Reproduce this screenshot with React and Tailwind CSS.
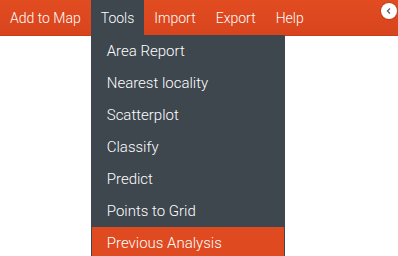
import React, { useState } from 'react';

const navItems = ['Add to Map', 'Tools', 'Import', 'Export', 'Help'];

const toolItems = [
  'Area Report',
  'Nearest locality',
  'Scatterplot',
  'Classify',
  'Predict',
  'Points to Grid',
  'Previous Analysis',
];

const App = () => {
  const [open] = useState('Tools');
  const [hover] = useState('Previous Analysis');

  return (
    <div className="relative w-[398px] h-[256px] bg-white overflow-hidden font-['Roboto',sans-serif] font-light">
      <nav className="relative flex h-[36px] bg-gradient-to-b from-[#e24c21] to-[#d8441d] border-b border-[#c93d17]">
        {navItems.map((item) => (
          <div key={item} className="relative">
            <button
              className={`h-[36px] px-[10px] text-[14px] leading-[36px] text-white ${
                open === item ? 'bg-[#3e464e]' : ''
              }`}
            >
              {item}
            </button>

            {open === item && (
              <ul className="absolute left-0 top-[35px] z-10 w-[194px] bg-[#3e464e] border-x border-[#3e464e]">
                {toolItems.map((tool) => (
                  <li
                    key={tool}
                    className={`h-[32px] pl-[15px] text-[15px] leading-[32px] text-white whitespace-nowrap ${
                      hover === tool ? 'bg-[#e04a20]' : ''
                    }`}
                  >
                    {tool}
                  </li>
                ))}
              </ul>
            )}
          </div>
        ))}

        <button
          className="absolute right-[1px] top-[3px] flex h-[16px] w-[16px] items-center justify-center rounded-full bg-white shadow-[0_0_2px_rgba(0,0,0,0.4)]"
          aria-label="Collapse"
        >
          <svg width="8" height="8" viewBox="0 0 8 8">
            <path d="M5 1.5 L2.5 4 L5 6.5" fill="none" stroke="#666" strokeWidth="1.4" />
          </svg>
        </button>
      </nav>
    </div>
  );
};

export default App;
